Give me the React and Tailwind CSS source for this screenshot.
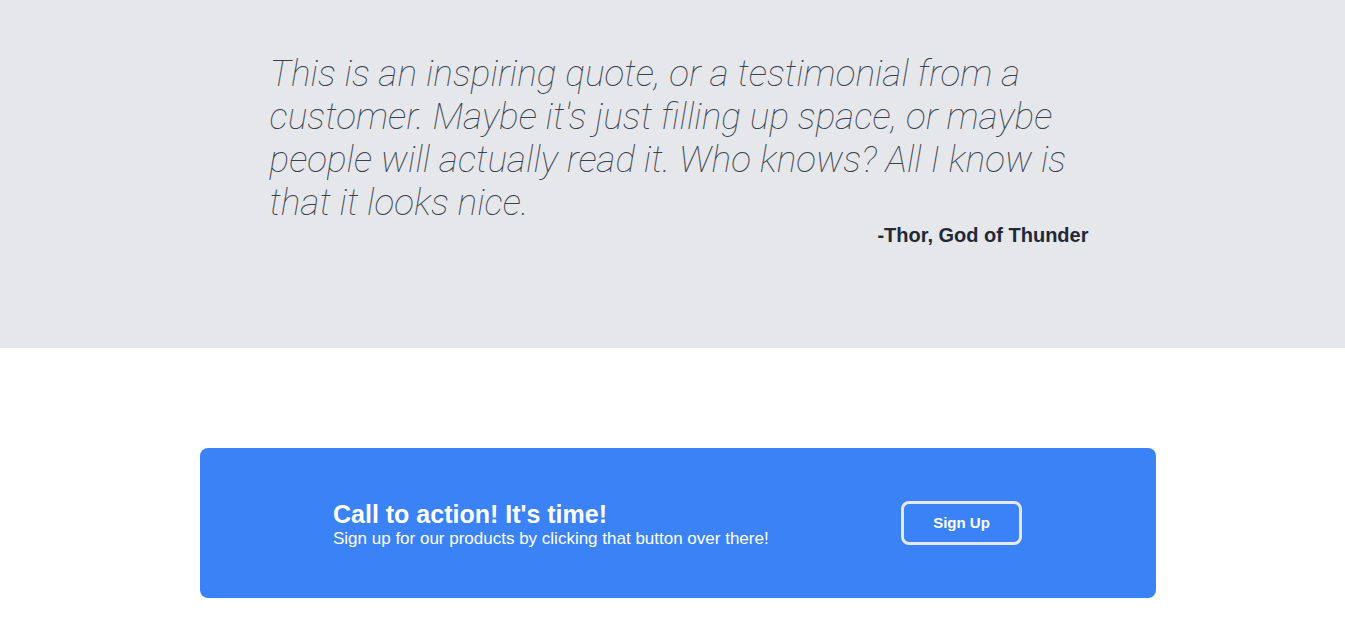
export default function App() {
  return (
    <div className="w-full bg-white" style={{ fontFamily: '"Liberation Sans", Arial, sans-serif' }}>
      <section className="bg-[#e5e7eb] h-[348px] pt-[52px]">
        <div className="mx-auto max-w-4xl px-8">
          <p className="pl-[13px] pr-[4px] text-[37px] leading-[43px] italic font-thin text-[#374151]" style={{ fontFamily: 'Roboto, "Noto Sans", sans-serif' }}>
            This is an inspiring quote, or a testimonial from a customer. Maybe it's just filling up space, or maybe people will actually read it. Who knows? All I know is that it looks nice.
          </p>
          <p className="mt-[1px] text-right text-[20px] leading-[20px] font-bold text-[#1f2937]">-Thor, God of Thunder</p>
        </div>
      </section>
      <div className="pt-[100px] pb-[27px] pl-[200px]">
        <div className="w-[956px] h-[150px] rounded-lg bg-[#3b82f6] flex items-center justify-between pl-[133px] pr-[134px]">
          <div className="text-white pt-[3px]">
            <h2 className="text-[25px] leading-[28px] font-bold">Call to action! It's time!</h2>
            <p className="text-[17px] leading-[22px]">Sign up for our products by clicking that button over there!</p>
          </div>
          <button className="w-[121px] h-[44px] rounded-lg border-[3px] border-[#e5e7eb] text-white text-[15px] font-bold">Sign Up</button>
        </div>
      </div>
    </div>
  );
}
